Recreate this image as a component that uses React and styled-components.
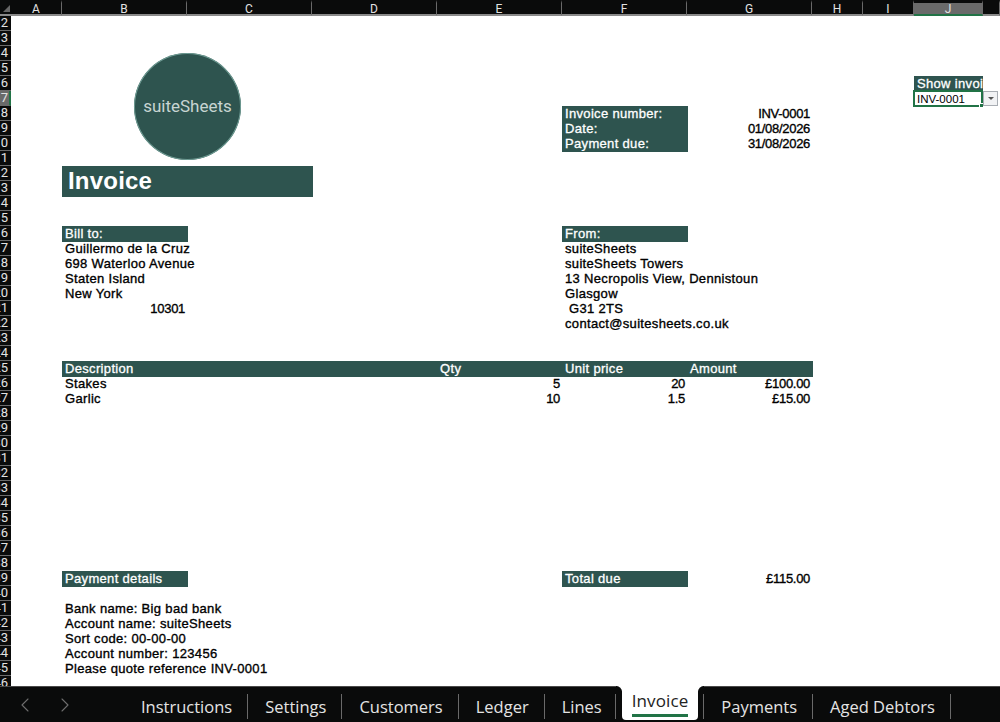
import React from "react";
import styled, { createGlobalStyle } from "styled-components";
import { ChevronLeft, ChevronRight } from "lucide-react";

const GREEN = "#2e544f";
const BAR = "#0a0b0b";
const XL = "#217346";

const GlobalStyle = createGlobalStyle`
  html, body {
    margin: 0;
    background: #fff;
    overflow: hidden;
  }
`;

const Page = styled.div`
  width: 1000px;
  height: 722px;
  display: flex;
  flex-direction: column;
  overflow: hidden;
`;

const Sheet = styled.div`
  position: relative;
  flex: 1;
  min-height: 0;
  overflow: hidden;
  display: grid;
  grid-template-columns: 11px 51px repeat(6, 125px) 51px 51px 69px 1fr;
  grid-template-rows: 16px repeat(45, 15px);
  font-family: "Liberation Sans", Arial, sans-serif;
  font-size: 13px;
  color: #000;
`;

const Corner = styled.div`
  grid-column: 1;
  grid-row: 1;
  background: ${BAR};
  border-bottom: 2px solid #8a8a8a;
  box-sizing: border-box;
  position: relative;
  &::after {
    content: "";
    position: absolute;
    right: 1px;
    bottom: 2px;
    border-style: solid;
    border-width: 0 0 7px 7px;
    border-color: transparent transparent #666 transparent;
  }
`;

const ColHead = styled.div`
  grid-column: ${(p) => p.$col};
  grid-row: 1;
  background: ${(p) => (p.$active ? "#6a6a6a" : BAR)};
  border-top: 3px solid ${BAR};
  border-bottom: 2px solid ${(p) => (p.$active ? XL : "#8a8a8a")};
  border-right: 1px solid #6a6a6a;
  box-sizing: border-box;
  color: #e2e2e2;
  font-family: Roboto, sans-serif;
  font-size: 12px;
  line-height: 13px;
  text-align: center;
  overflow: hidden;
`;

const RowHead = styled.div`
  grid-column: 1;
  grid-row: ${(p) => p.$row};
  background: ${(p) => (p.$active ? "#6a6a6a" : BAR)};
  border-bottom: 1px solid #6a6a6a;
  border-right: ${(p) => (p.$active ? `2px solid ${XL}` : "0")};
  box-sizing: border-box;
  color: #e2e2e2;
  font-family: Roboto, sans-serif;
  font-size: 13px;
  line-height: 14px;
  text-align: right;
  padding-right: ${(p) => (p.$active ? "1px" : "3px")};
  overflow: hidden;
  direction: rtl;
  white-space: nowrap;
`;

const Cell = styled.div`
  grid-column: ${(p) => p.$col} / span ${(p) => p.$span || 1};
  grid-row: ${(p) => p.$row};
  padding: 0 2px 0 3px;
  line-height: 15px;
  white-space: pre;
  overflow: hidden;
  letter-spacing: ${(p) => (p.$num ? "-0.3px" : "0.33px")};
  -webkit-text-stroke: 0.35px #000;
  text-align: ${(p) => (p.$num ? "right" : "left")};
`;

// filled cells run 1px past their column and row, same as the reference
const Band = styled.div`
  grid-column: ${(p) => p.$col} / span ${(p) => p.$span || 1};
  grid-row: ${(p) => p.$row} / span ${(p) => p.$rows || 1};
  background: ${GREEN};
  margin: 0 -1px -1px 0;
`;

const HeadCell = styled(Cell)`
  color: #fff;
  -webkit-text-stroke: 0.3px #fff;
  z-index: 1;
`;

const Title = styled.div`
  grid-column: 3 / span 2;
  grid-row: 12 / span 2;
  background: ${GREEN};
  margin: 0 -1px 0 0;
  height: 31px;
  padding-left: 6px;
  color: #fff;
  font-size: 24px;
  font-weight: 700;
  line-height: 29px;
  letter-spacing: 0.2px;
`;

const Logo = styled.div`
  position: absolute;
  left: 134px;
  top: 53px;
  width: 107px;
  height: 107px;
  padding-bottom: 2px;
  box-sizing: border-box;
  border-radius: 50%;
  background: ${GREEN};
  box-shadow: inset 0 0 0 1px #6f9c94;
  display: flex;
  align-items: center;
  justify-content: center;
  color: #c8d5d2;
  font-family: Roboto, sans-serif;
  font-size: 17px;
`;

const PickerHead = styled(Cell)`
  grid-column: 11;
  color: #fff;
  background: ${GREEN};
  -webkit-text-stroke: 0.3px #fff;
`;

const Selected = styled.div`
  grid-column: 11;
  grid-row: 7;
  margin: -1px 0 -1px -1px;
  border: 2px solid ${XL};
  box-sizing: border-box;
  padding-left: 2px;
  font-size: 11.5px;
  line-height: 14px;
  position: relative;
  white-space: nowrap;
  &::after {
    content: "";
    position: absolute;
    right: -3px;
    bottom: -3px;
    width: 5px;
    height: 5px;
    background: ${XL};
    border: 1px solid #fff;
    box-sizing: border-box;
  }
`;

const Dropdown = styled.div`
  position: absolute;
  left: 983px;
  top: 91px;
  width: 15px;
  height: 15px;
  box-sizing: border-box;
  border: 1px solid #a8adb3;
  background: #f1f2f4;
  display: flex;
  align-items: center;
  justify-content: center;
  &::before {
    content: "";
    border-style: solid;
    border-width: 3px 3px 0 3px;
    border-color: #555 transparent transparent transparent;
  }
`;

const TabBar = styled.div`
  height: 36px;
  flex: none;
  background: ${BAR};
  border-top: 1px solid #4a4a4a;
  box-sizing: border-box;
  display: flex;
  align-items: stretch;
  font-family: "Open Sans", sans-serif;
  font-size: 16.5px;
  color: #e4e4e4;
`;

const Nav = styled.div`
  width: 124px;
  flex: none;
  display: flex;
  align-items: center;
  gap: 16px;
  padding-left: 13px;
  box-sizing: border-box;
  color: #6e6e6e;
`;

const Tab = styled.div`
  position: relative;
  display: flex;
  align-items: center;
  padding: 3px ${(p) => (p.$narrow ? "14px" : "16px")} 0 17px;
  white-space: nowrap;
  &::after {
    content: "";
    position: absolute;
    right: 0;
    top: 7px;
    bottom: 3px;
    width: 1px;
    background: #6a6a6a;
  }
`;

const ActiveTab = styled.div`
  position: relative;
  margin: -1px 5px 2px 6px;
  padding: 0 10px;
  background: #fff;
  color: #222;
  border-radius: 0 0 4px 4px;
  display: flex;
  align-items: flex-start;
  &::before,
  &::after {
    content: "";
    position: absolute;
    top: 0;
    width: 6px;
    height: 6px;
  }
  &::before {
    left: -6px;
    background: radial-gradient(circle at 0 100%, ${BAR} 5.5px, #fff 6.5px);
  }
  &::after {
    right: -6px;
    background: radial-gradient(circle at 100% 100%, ${BAR} 5.5px, #fff 6.5px);
  }
`;

const ActiveLabel = styled.span`
  display: block;
  margin-top: 4px;
  height: 27px;
  box-sizing: border-box;
  border-bottom: 3px solid ${XL};
  line-height: 22px;
  font-size: 17px;
  letter-spacing: 0.1px;
  font-weight: 500;
`;

const Divider = styled.div`
  width: 1px;
  background: #6a6a6a;
  margin: 7px 0 3px;
  flex: none;
`;

const COLS = ["A", "B", "C", "D", "E", "F", "G", "H", "I", "J", ""];
const TABS_BEFORE = ["Instructions", "Settings", "Customers", "Ledger", "Lines"];
const TABS_AFTER = ["Payments", "Aged Debtors"];

const billTo = ["Guillermo de la Cruz", "698 Waterloo Avenue", "Staten Island", "New York"];
const from = [
  "suiteSheets",
  "suiteSheets Towers",
  "13 Necropolis View, Dennistoun",
  "Glasgow",
  " G31 2TS",
  "contact@suitesheets.co.uk",
];
const bank = [
  "Bank name: Big bad bank",
  "Account name: suiteSheets",
  "Sort code: 00-00-00",
  "Account number: 123456",
  "Please quote reference INV-0001",
];

// grid row = sheet row, because row 1 is scrolled away and the header takes its place
const App = () => {
  const rows = [];
  for (let i = 2; i <= 46; i++) rows.push(i);

  return (
    <Page>
      <GlobalStyle />
      <Sheet>
        <Corner />
        {COLS.map((c, i) => (
          <ColHead key={i} $col={i + 2} $active={c === "J"}>
            {c}
          </ColHead>
        ))}
        {rows.map((r) => (
          <RowHead key={r} $row={r} $active={r === 7}>
            {r}
          </RowHead>
        ))}

        <Logo>suiteSheets</Logo>

        <PickerHead $row={6}>Show invoice</PickerHead>
        <Selected>INV-0001</Selected>
        <Dropdown />

        <Band $col={7} $row={8} $rows={3} />
        <HeadCell $col={7} $row={8}>Invoice number:</HeadCell>
        <HeadCell $col={7} $row={9}>Date:</HeadCell>
        <HeadCell $col={7} $row={10}>Payment due:</HeadCell>
        <Cell $col={8} $row={8} $num>INV-0001</Cell>
        <Cell $col={8} $row={9} $num>01/08/2026</Cell>
        <Cell $col={8} $row={10} $num>31/08/2026</Cell>

        <Title>Invoice</Title>

        <Band $col={3} $row={16} />
        <HeadCell $col={3} $row={16}>Bill to:</HeadCell>
        {billTo.map((t, i) => (
          <Cell key={t} $col={3} $row={17 + i} $span={2}>{t}</Cell>
        ))}
        <Cell $col={3} $row={21} $num>10301</Cell>

        <Band $col={7} $row={16} />
        <HeadCell $col={7} $row={16}>From:</HeadCell>
        {from.map((t, i) => (
          <Cell key={t} $col={7} $row={17 + i} $span={2}>{t}</Cell>
        ))}

        <Band $col={3} $row={25} $span={6} />
        <HeadCell $col={3} $row={25}>Description</HeadCell>
        <HeadCell $col={6} $row={25}>Qty</HeadCell>
        <HeadCell $col={7} $row={25}>Unit price</HeadCell>
        <HeadCell $col={8} $row={25}>Amount</HeadCell>

        <Cell $col={3} $row={26}>Stakes</Cell>
        <Cell $col={6} $row={26} $num>5</Cell>
        <Cell $col={7} $row={26} $num>20</Cell>
        <Cell $col={8} $row={26} $num>£100.00</Cell>
        <Cell $col={3} $row={27}>Garlic</Cell>
        <Cell $col={6} $row={27} $num>10</Cell>
        <Cell $col={7} $row={27} $num>1.5</Cell>
        <Cell $col={8} $row={27} $num>£15.00</Cell>

        <Band $col={3} $row={39} />
        <HeadCell $col={3} $row={39}>Payment details</HeadCell>
        <Band $col={7} $row={39} />
        <HeadCell $col={7} $row={39}>Total due</HeadCell>
        <Cell $col={8} $row={39} $num>£115.00</Cell>

        {bank.map((t, i) => (
          <Cell key={t} $col={3} $row={41 + i} $span={3}>{t}</Cell>
        ))}
      </Sheet>

      <TabBar>
        <Nav>
          <ChevronLeft size={24} strokeWidth={1.1} />
          <ChevronRight size={24} strokeWidth={1.1} />
        </Nav>
        {TABS_BEFORE.map((t) => (
          <Tab key={t} $narrow={t === "Lines"}>{t}</Tab>
        ))}
        <ActiveTab>
          <ActiveLabel>Invoice</ActiveLabel>
        </ActiveTab>
        <Divider />
        {TABS_AFTER.map((t) => (
          <Tab key={t}>{t}</Tab>
        ))}
      </TabBar>
    </Page>
  );
};

export default App;
